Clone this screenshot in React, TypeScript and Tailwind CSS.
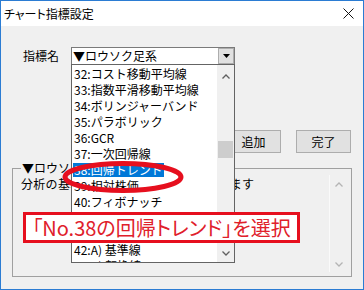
// App.tsx
const items = [
  '32:コスト移動平均線',
  '33:指数平滑移動平均線',
  '34:ボリンジャーバンド',
  '35:パラボリック',
  '36:GCR',
  '37:一次回帰線',
  '38:回帰トレンド',
  '39:相対株価',
  '40:フィボナッチ',
  '41:サイコロジカル',
  '42:一目均衡表',
  '42:A) 基準線',
  '42:B) 転換線',
];

function Chevron({ up, color = '#606060' }: { up?: boolean; color?: string }) {
  return (
    <svg width="8" height="5" viewBox="0 0 8 5">
      <path
        d={up ? 'M0.5 4.5 L4 1 L7.5 4.5' : 'M0.5 0.5 L4 4 L7.5 0.5'}
        fill="none"
        stroke={color}
        strokeWidth="1.3"
      />
    </svg>
  );
}

function ComboList() {
  return (
    <div className="absolute left-[-1px] top-full w-[164px] h-[199px] border border-[#646464] bg-white flex z-10">
      <div className="flex-1 flex flex-col pt-[1px] overflow-hidden">
        {items.map(item => (
          <div key={item} className="h-[16px] shrink-0 flex items-center pl-[1px] leading-[14px] whitespace-nowrap">
            {item.startsWith('38') ? (
              <span className="bg-[#0078d7] text-white px-[1px] h-[14px]">{item}</span>
            ) : (
              <span className="px-[1px]">{item}</span>
            )}
          </div>
        ))}
      </div>
      <div className="w-[17px] bg-[#f0f0f0] flex flex-col">
        <div className="h-[20px] flex items-center justify-center pt-[3px]">
          <Chevron up />
        </div>
        <div className="flex-1 flex flex-col px-[1px]">
          <div className="mt-[56px] h-[17px] bg-[#cdcdcd]" />
        </div>
        <div className="h-[17px] flex items-center justify-center">
          <Chevron />
        </div>
      </div>
    </div>
  );
}

export default function App() {
  return (
    <div className="w-[364px] h-[290px] relative overflow-hidden flex flex-col bg-[#f0f0f0] border border-[#2b7cd3] text-black text-[12px] leading-[14px] font-['Noto_Sans_CJK_JP',sans-serif]">
      {/* title bar */}
      <div className="h-[25px] bg-white flex items-center justify-between pl-[3px] pr-[9px]">
        <span className="[font-feature-settings:'palt']">チャート指標設定</span>
        <svg width="11" height="11" viewBox="0 0 11 11">
          <path d="M0.5 0.5 L10.5 10.5 M10.5 0.5 L0.5 10.5" stroke="#111" strokeWidth="1" />
        </svg>
      </div>

      <div className="flex-1 flex flex-col px-[11px]">
        {/* indicator select */}
        <div className="flex items-center mt-[21px] ml-[11px]">
          <span className="w-[48px]">指標名</span>
          <div className="relative w-[164px] h-[18px] border border-[#7a7a7a] bg-white flex items-center">
            <span className="flex-1 pl-[1px] whitespace-nowrap">▼ロウソク足系</span>
            <div className="w-[16px] h-[16px] bg-[#e1e1e1] border border-[#adadad] flex items-center justify-center">
              <svg width="7" height="4" viewBox="0 0 7 4">
                <path d="M0 0 L7 0 L3.5 4 Z" fill="#000" />
              </svg>
            </div>
            <ComboList />
          </div>
        </div>

        {/* buttons */}
        <div className="flex justify-end gap-[15px] mt-[65px] pr-[1px]">
          <button className="w-[55px] h-[23px] bg-[#e1e1e1] border border-[#adadad]">追加</button>
          <button className="w-[55px] h-[23px] bg-[#e1e1e1] border border-[#adadad]">完了</button>
        </div>

        {/* group */}
        <fieldset className="mt-[8px] border border-[#a0a0a0] pb-[4px] pr-[4px]">
          <legend className="ml-[8px] px-[1px]">▼ロウソク足系</legend>
          <div className="h-[97px] flex">
            <div className="flex-1 pl-[8px] pt-[2px] whitespace-nowrap tracking-[0.3px]">分析の基本となるロウソク足を表示します</div>
            <div className="w-[18px] border-l border-[#fafafa] flex flex-col justify-between pt-[7px] pb-[5px] items-center">
              <Chevron up color="#b4b4b4" />
              <Chevron color="#b4b4b4" />
            </div>
          </div>
        </fieldset>
      </div>

      {/* annotation: red ellipse */}
      <svg className="absolute left-[60px] top-[158px] z-20" width="124" height="36" viewBox="0 0 124 36">
        <ellipse cx="62" cy="18" rx="58" ry="13.5" fill="none" stroke="#e60f1e" strokeWidth="5" />
      </svg>

      {/* annotation: caption */}
      <div className="absolute left-[22px] top-[211px] w-[277px] h-[31px] z-20 bg-white border-[3px] border-[#e60f1e] flex items-center justify-center text-[#e0202a] text-[20px] leading-[22px] whitespace-nowrap [font-feature-settings:'palt']">
        「No.38の回帰トレンド」を選択
      </div>
    </div>
  );
}
